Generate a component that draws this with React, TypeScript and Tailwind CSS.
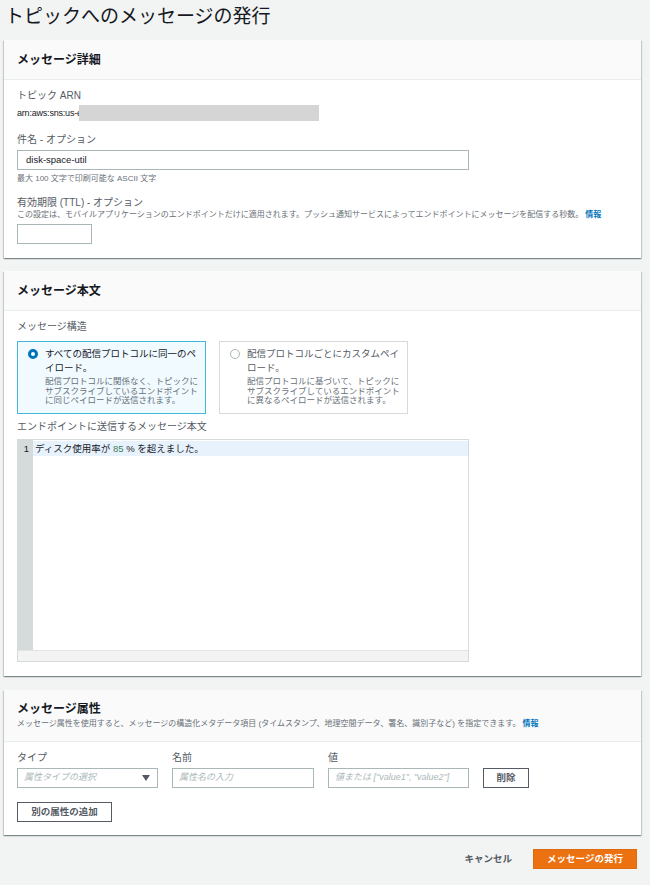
import React from "react";

const font = "font-['Liberation_Sans','Noto_Sans_CJK_JP',sans-serif]";

function Panel({ children }: { children: React.ReactNode }) {
  return (
    <div className="bg-white shadow-[0_1px_1px_0_rgba(0,28,36,0.3),1px_1px_1px_0_rgba(0,28,36,0.15),-1px_1px_1px_0_rgba(0,28,36,0.15)]">
      {children}
    </div>
  );
}

function Radio({ checked }: { checked: boolean }) {
  return checked ? (
    <span className="mt-[2px] block h-[10px] w-[10px] shrink-0 rounded-full border-[3px] border-[#0073bb] bg-white" />
  ) : (
    <span className="mt-[2px] block h-[10px] w-[10px] shrink-0 rounded-full border border-[#aab7b8] bg-white" />
  );
}

export default function App() {
  return (
    <div className={`${font} min-h-[885px] bg-[#f2f3f3] pl-[4px] pr-[9px] text-[#16191f]`}>
      <h1 className="h-[40px] pt-[5px] pl-[1px] text-[19px] leading-[24px] font-normal text-[#16191f]">
        トピックへのメッセージの発行
      </h1>

      {/* Panel 1 */}
      <Panel>
        <div className="flex h-[40px] items-center border-b border-[#eaeded] bg-[#fafafa] px-[13px]">
          <h2 className="text-[12px] font-bold leading-[14px]">メッセージ詳細</h2>
        </div>
        <div className="px-[13px] pt-[9px] pb-[14px]">
          <div className="text-[10px] leading-[14px] text-[#545b64]">トピック ARN</div>
          <div className="mt-[2px] flex h-[16px] items-center">
            <span className="text-[9px] leading-[16px] tracking-[-0.2px] text-[#16191f]">arn:aws:sns:us-e</span>
            <span className="-ml-[3px] block h-[16px] w-[240px] bg-[#d5d5d5]" />
          </div>
          <div className="mt-[12px] text-[10px] leading-[14px] text-[#545b64]">件名 - オプション</div>
          <div className="mt-[3px] flex h-[20px] w-[452px] items-center border border-[#aab7b8] px-[8px] text-[9.5px] text-[#16191f]">
            disk-space-util
          </div>
          <div className="mt-[3px] text-[8px] leading-[12px] text-[#687078]">最大 100 文字で印刷可能な ASCII 文字</div>
          <div className="mt-[11px] text-[10px] leading-[14px] text-[#545b64]">有効期限 (TTL) - オプション</div>
          <div className="text-[8px] leading-[10px] text-[#687078] whitespace-nowrap">
            この設定は、モバイルアプリケーションのエンドポイントだけに適用されます。プッシュ通知サービスによってエンドポイントにメッセージを配信する秒数。
            <span className="ml-[2px] font-bold text-[#0073bb]">情報</span>
          </div>
          <div className="mt-[4px] h-[20px] w-[75px] border border-[#aab7b8]" />
        </div>
      </Panel>

      {/* Panel 2 */}
      <div className="mt-[13px]">
        <Panel>
          <div className="flex h-[40px] items-center border-b border-[#eaeded] bg-[#fafafa] px-[13px]">
            <h2 className="text-[12px] font-bold leading-[14px]">メッセージ本文</h2>
          </div>
          <div className="px-[13px] pt-[9px] pb-[14px]">
            <div className="text-[10px] leading-[14px] text-[#545b64]">メッセージ構造</div>
            <div className="mt-[7px] flex gap-[13px]">
              <div className="flex h-[73px] w-[189px] gap-[7px] border border-[#44b9d6] bg-[#f1faff] pl-[10px] pt-[5px]">
                <Radio checked />
                <div>
                  <div className="text-[9.5px] leading-[14px] text-[#16191f] whitespace-nowrap">
                    すべての配信プロトコルに同一のペ<br />イロード。
                  </div>
                  <div className="mt-[2px] text-[8.5px] leading-[9.5px] text-[#687078] whitespace-nowrap">
                    配信プロトコルに関係なく、トピックに<br />
                    サブスクライブしているエンドポイント<br />
                    に同じペイロードが送信されます。
                  </div>
                </div>
              </div>
              <div className="flex h-[73px] w-[189px] gap-[7px] border border-[#d5dbdb] bg-white pl-[10px] pt-[5px]">
                <Radio checked={false} />
                <div>
                  <div className="text-[9.5px] leading-[14px] text-[#545b64] whitespace-nowrap">
                    配信プロトコルごとにカスタムペイ<br />ロード。
                  </div>
                  <div className="mt-[2px] text-[8.5px] leading-[9.5px] text-[#687078] whitespace-nowrap">
                    配信プロトコルに基づいて、トピックに<br />
                    サブスクライブしているエンドポイント<br />
                    に異なるペイロードが送信されます。
                  </div>
                </div>
              </div>
            </div>
            <div className="mt-[6px] text-[10px] leading-[14px] text-[#545b64]">エンドポイントに送信するメッセージ本文</div>
            <div className="mt-[5px] flex h-[223px] w-[452px] flex-col border border-[#d5dbdb]">
              <div className="flex flex-1">
                <div className="w-[15px] bg-[#d5dbdb] pt-[1px] pr-[4px] text-right text-[9.5px] leading-[15px] text-[#16191f]">1</div>
                <div className="flex-1 pt-[1px]">
                  <div className="h-[15px] bg-[#e8f2fd] pl-[2px] text-[9.5px] leading-[15px] text-[#16191f]">
                    ディスク使用率が <span className="text-[#3b7e5a]">85</span> % を超えました。
                  </div>
                </div>
              </div>
              <div className="h-[11px] border-t border-[#e4e4e4] bg-[#f3f3f3]" />
            </div>
          </div>
        </Panel>
      </div>

      {/* Panel 3 */}
      <div className="mt-[14px]">
        <Panel>
          <div className="flex h-[52px] flex-col justify-center border-b border-[#eaeded] bg-[#fafafa] px-[13px]">
            <h2 className="text-[12px] font-bold leading-[14px]">メッセージ属性</h2>
            <div className="mt-[3px] text-[8px] leading-[10px] text-[#687078]">
              メッセージ属性を使用すると、メッセージの構造化メタデータ項目 (タイムスタンプ、地理空間データ、署名、識別子など) を指定できます。
              <span className="ml-[2px] font-bold text-[#0073bb]">情報</span>
            </div>
          </div>
          <div className="px-[13px] pt-[9px] pb-[13px]">
            <div className="flex gap-[14px]">
              <div className="w-[141px]">
                <div className="text-[10px] leading-[14px] text-[#545b64]">タイプ</div>
                <div className="mt-[3px] flex h-[20px] items-center justify-between border border-[#aab7b8] pl-[6px] pr-[7px]">
                  <span className="text-[9px] italic text-[#aab7b8]">属性タイプの選択</span>
                  <svg width="8" height="6" viewBox="0 0 8 6"><path d="M0 0h8L4 6z" fill="#545b64" /></svg>
                </div>
              </div>
              <div className="w-[142px]">
                <div className="text-[10px] leading-[14px] text-[#545b64]">名前</div>
                <div className="mt-[3px] flex h-[20px] items-center border border-[#aab7b8] pl-[6px]">
                  <span className="text-[9px] italic text-[#aab7b8]">属性名の入力</span>
                </div>
              </div>
              <div className="w-[141px]">
                <div className="text-[10px] leading-[14px] text-[#545b64]">値</div>
                <div className="mt-[3px] flex h-[20px] items-center border border-[#aab7b8] pl-[6px]">
                  <span className="text-[9px] italic text-[#aab7b8] whitespace-nowrap">値または ["value1", "value2"]</span>
                </div>
              </div>
              <div className="flex flex-col">
                <div className="h-[14px]" />
                <button className="mt-[3px] flex h-[20px] w-[46px] items-center justify-center border border-[#545b64] bg-white text-[9.5px] font-bold text-[#545b64]">
                  削除
                </button>
              </div>
            </div>
            <button className="mt-[14px] flex h-[20px] w-[95px] items-center justify-center border border-[#545b64] bg-white text-[9.5px] font-bold text-[#545b64]">
              別の属性の追加
            </button>
          </div>
        </Panel>
      </div>

      {/* Footer */}
      <div className="mt-[14px] flex items-center justify-end gap-[21px] pr-[4px]">
        <span className="text-[9.5px] font-bold text-[#545b64]">キャンセル</span>
        <button className="flex h-[20px] w-[104px] items-center justify-center border border-[#dd6b10] bg-[#ec7211] text-[9.5px] font-bold text-white">
          メッセージの発行
        </button>
      </div>
    </div>
  );
}
